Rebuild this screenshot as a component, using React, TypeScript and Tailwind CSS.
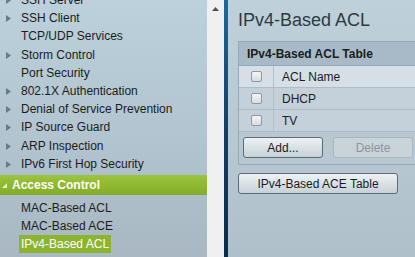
import { ReactNode } from 'react'

function Arrow() {
  return (
    <svg width="5" height="7" viewBox="0 0 5 7" className="absolute left-[6px] top-[6px]">
      <path d="M0 0 L5 3.5 L0 7 Z" fill="#6b7a84" />
    </svg>
  )
}

function NavItem({ label, arrow }: { label: string; arrow?: boolean }) {
  return (
    <div className="relative h-[18.2px] pl-[21px] leading-[18px] text-[12px] text-[#1c1c1c] whitespace-nowrap">
      {arrow && <Arrow />}
      {label}
    </div>
  )
}

function SubItem({ label, active }: { label: string; active?: boolean }) {
  return (
    <div className="h-[18px] pl-[19px] text-[12px] leading-[18px] whitespace-nowrap">
      <span
        className={
          active
            ? 'inline-block bg-[#8db42f] text-white px-[2px] w-[92px] h-[18px]'
            : 'inline-block px-[2px] text-[#1c1c1c]'
        }
      >
        {label}
      </span>
    </div>
  )
}

function Checkbox() {
  return (
    <div className="w-[11px] h-[11px] rounded-[2px] border border-[#8e9aa3] bg-gradient-to-b from-[#f4f5f6] to-[#d9dde0]" />
  )
}

function Row({ children, className }: { children: ReactNode; className: string }) {
  return (
    <div className={'flex h-[22px] border-b border-[#aebcc6] ' + className}>
      <div className="w-[35px] flex items-center justify-center border-r border-[#b3c0ca]">
        <Checkbox />
      </div>
      <div className="pl-[8px] flex items-center text-[12px] text-[#1c1c1c]">{children}</div>
    </div>
  )
}

export default function App() {
  return (
    <div
      className="flex w-[415px] h-[257px] overflow-hidden"
      style={{ fontFamily: '"Liberation Sans", Arial, sans-serif' }}
    >
      {/* left navigation */}
      <div className="w-[207px] h-full overflow-hidden bg-gradient-to-b from-[#bcd1db] via-[#b2c5d0] to-[#a9b8c3]">
        <div className="-mt-[9px]">
          <NavItem label="SSH Server" arrow />
          <NavItem label="SSH Client" arrow />
          <NavItem label="TCP/UDP Services" />
          <NavItem label="Storm Control" arrow />
          <NavItem label="Port Security" />
          <NavItem label="802.1X Authentication" arrow />
          <NavItem label="Denial of Service Prevention" arrow />
          <NavItem label="IP Source Guard" arrow />
          <NavItem label="ARP Inspection" arrow />
          <NavItem label="IPv6 First Hop Security" arrow />
        </div>
        <div className="relative mt-[2px] h-[20px] pl-[12px] leading-[20px] text-[12px] font-bold text-white bg-gradient-to-b from-[#9cc43e] to-[#82ac27]">
          <svg width="5" height="5" viewBox="0 0 5 5" className="absolute left-[2px] top-[8px]">
            <path d="M5 0 L5 5 L0 5 Z" fill="#e8f2d0" />
          </svg>
          Access Control
        </div>
        <div className="mt-[4px]">
          <SubItem label="MAC-Based ACL" />
          <SubItem label="MAC-Based ACE" />
          <SubItem label="IPv4-Based ACL" active />
          <SubItem label="IPv6-Based ACE" />
        </div>
      </div>

      {/* scrollbar */}
      <div className="w-[17px] h-full bg-[#f0f0f0] flex justify-center pt-[7px]">
        <svg width="7" height="4" viewBox="0 0 7 4">
          <path d="M0 4 L3.5 0 L7 4 Z" fill="#505050" />
        </svg>
      </div>
      <div className="w-[4px] h-full bg-gradient-to-b from-[#22679a] via-[#143f66] to-[#0b2c4b]" />

      {/* content */}
      <div className="flex-1 h-full bg-gradient-to-b from-[#bed1db] to-[#b0c0ca] pl-[10px] overflow-hidden">
        <div className="h-[41px] pt-[9px] text-[18px] leading-[22px] text-[#2e3a42] whitespace-nowrap">
          IPv4-Based ACL
        </div>
        <div className="w-[200px] border border-[#97a9b6] border-r-0">
          <div className="h-[24px] pl-[8px] leading-[24px] text-[12px] font-bold text-[#1c1c1c] bg-[#a8bac7] border-b border-[#97a9b6] whitespace-nowrap">
            IPv4-Based ACL Table
          </div>
          <Row className="bg-[#d5dfe5]">ACL Name</Row>
          <Row className="bg-[#c4d1da]">DHCP</Row>
          <Row className="bg-[#c4d1da]">TV</Row>
          <div className="flex gap-[10px] pl-[4px] pt-[5px] pb-[6px] bg-[#b8c7d1]">
            <button className="w-[80px] h-[21px] rounded-[3px] border border-[#5d6d78] bg-gradient-to-b from-[#eef2f4] to-[#c6d1d8] text-[12px] text-[#1c1c1c]">
              Add...
            </button>
            <button className="w-[80px] h-[21px] rounded-[3px] border border-[#a9b6be] bg-[#c8d3da] text-[12px] text-[#8c959b]">
              Delete
            </button>
          </div>
        </div>
        <button className="mt-[8px] w-[160px] h-[21px] rounded-[3px] border border-[#5d6d78] bg-gradient-to-b from-[#eef2f4] to-[#c6d1d8] text-[12px] text-[#1c1c1c]">
          IPv4-Based ACE Table
        </button>
      </div>
    </div>
  )
}
